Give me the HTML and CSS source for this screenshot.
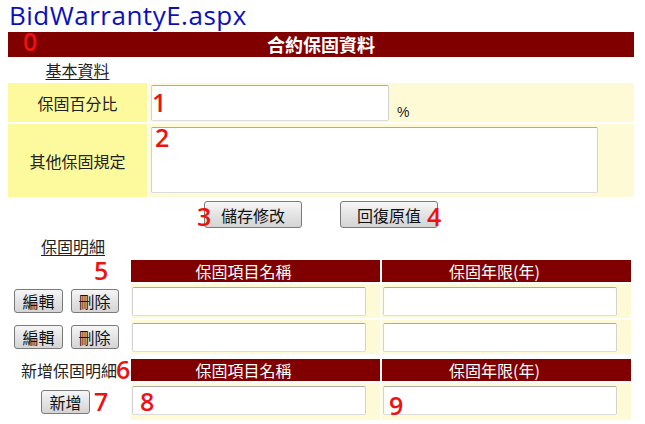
FILE: index.html
```html
<!DOCTYPE html>
<html lang="zh-Hant">
<head>
<meta charset="utf-8">
<title>BidWarrantyE.aspx</title>
<link rel="stylesheet" href="styles.css">
</head>
<body>
<div class="page">
  <h1 class="title">BidWarrantyE.aspx</h1>
  <div class="form">
    <div class="bar">合約保固資料</div>
    <div class="sub"><span class="ul">基本資料</span></div>
    <div class="grid1">
      <div class="lbl">保固百分比</div>
      <div class="val val1"><input class="in1" type="text"><span class="pct">%</span></div>
      <div class="lbl">其他保固規定</div>
      <div class="val val2"><textarea class="ta"></textarea></div>
    </div>
    <div class="btnrow">
      <button class="btn btn-lg">儲存修改</button>
      <button class="btn btn-lg">回復原值</button>
    </div>
    <div class="sub2"><span class="ul">保固明細</span></div>
    <div class="grid2">
      <div class="side"></div>
      <div class="th">保固項目名稱</div>
      <div class="th">保固年限(年)</div>

      <div class="side acts"><button class="btn btn-sm">編輯</button><button class="btn btn-sm">刪除</button></div>
      <div class="td"><input class="in2" type="text"></div>
      <div class="td"><input class="in2" type="text"></div>

      <div class="side acts"><button class="btn btn-sm">編輯</button><button class="btn btn-sm">刪除</button></div>
      <div class="td"><input class="in2" type="text"></div>
      <div class="td"><input class="in2" type="text"></div>
    </div>
    <div class="grid2 grid3">
      <div class="side newlbl">新增保固明細</div>
      <div class="th">保固項目名稱</div>
      <div class="th">保固年限(年)</div>

      <div class="side acts addcell"><button class="btn btn-sm">新增</button></div>
      <div class="td tdlast"><input class="in2" type="text"></div>
      <div class="td tdlast"><input class="in2" type="text"></div>
    </div>
  </div>

  <span class="num n0">0</span>
  <span class="num n1">1</span>
  <span class="num n2">2</span>
  <span class="num n3">3</span>
  <span class="num n4">4</span>
  <span class="num n5">5</span>
  <span class="num n6">6</span>
  <span class="num n7">7</span>
  <span class="num n8">8</span>
  <span class="num n9">9</span>
</div>
</body>
</html>
```

FILE: styles.css
```css
html, body {
  margin: 0;
  padding: 0;
  background: #ffffff;
}
body {
  font-family: "Noto Sans CJK TC", "Noto Sans", sans-serif;
  font-size: 16px;
  color: #222;
}
.page {
  position: relative;
  width: 645px;
  height: 424px;
  overflow: hidden;
}
.title {
  margin: 0;
  height: 32px;
  padding-left: 9px;
  font-family: "Open Sans", "Liberation Sans", sans-serif;
  font-weight: normal;
  font-size: 26px;
  line-height: 30px;
  color: #0b10bb;
  letter-spacing: 0.5px;
  white-space: nowrap;
}
.form {
  margin-left: 8px;
  width: 626px;
}
.bar {
  height: 25px;
  background: #800000;
  color: #fff;
  font-weight: bold;
  font-size: 18px;
  line-height: 25px;
  text-align: center;
}
.sub {
  width: 139px;
  height: 26px;
  line-height: 26px;
  text-align: center;
}
.ul {
  text-decoration: underline;
  text-underline-offset: 2px;
  line-height: 1;
  color: #222;
}
.grid1 {
  display: grid;
  grid-template-columns: 139px 485px;
  grid-template-rows: 39px 73px;
  gap: 2px;
}
.lbl {
  background: #fdfa9d;
  display: flex;
  align-items: center;
  justify-content: center;
}
.val {
  background: #fffad6;
  display: flex;
  align-items: flex-start;
}
.val1 {
  padding: 2px 0 1px 2px;
}
.val2 {
  padding: 3px 0 4px 2px;
}
.in1, .ta, .in2 {
  box-sizing: border-box;
  margin: 0;
  background: #fff;
  border: 1px solid;
  border-color: #aaa #d2d2d2 #dcdcdc #d2d2d2;
  border-radius: 2px;
  font: inherit;
  outline: none;
  padding: 0;
}
.in1 {
  width: 238px;
  height: 36px;
}
.pct {
  align-self: flex-end;
  margin-left: 8px;
  font-family: "Liberation Sans", sans-serif;
  font-size: 14px;
  line-height: 18px;
  color: #222;
}
.ta {
  width: 447px;
  height: 66px;
  resize: none;
}
.btnrow {
  display: flex;
  justify-content: center;
  gap: 38px;
  padding: 4px 0;
  height: 27px;
}
.btn {
  box-sizing: border-box;
  margin: 0;
  border: 1px solid #7a7a7a;
  border-radius: 3px;
  background: linear-gradient(#f6f6f6, #e4e4e4 50%, #d4d4d4);
  font-family: "Noto Sans CJK TC", sans-serif;
  font-size: 16px;
  color: #111;
  line-height: 1;
  padding: 0;
}
.btn-lg {
  width: 98px;
  height: 27px;
}
.btn-sm {
  height: 24px;
  padding: 0 7px;
}
.sub2 {
  height: 28px;
  line-height: 28px;
  padding-left: 33px;
}
.grid2 {
  display: grid;
  grid-template-columns: 121px 249px 249px;
  grid-template-rows: 22px 34px 34px;
  gap: 2px;
}
.grid3 {
  margin-top: 5px;
  grid-template-rows: 22px 37px;
}
.th {
  background: #800000;
  color: #fff;
  font-size: 16px;
  line-height: 22px;
  text-align: center;
  padding-right: 24px;
}
.td {
  background: #fffad6;
  padding: 3px 0 2px 1px;
}
.tdlast {
  padding-top: 3px;
}
.in2 {
  width: 234px;
  height: 29px;
}
.side {
  display: flex;
  align-items: center;
  justify-content: center;
}
.acts {
  gap: 8px;
  padding-right: 4px;
}
.newlbl {
  font-size: 16px;
  color: #222;
  padding-left: 1px;
}
.addcell {
  padding-right: 6px;
}
.num {
  position: absolute;
  font-family: "Open Sans", "Liberation Sans", sans-serif;
  font-weight: 600;
  font-size: 25px;
  line-height: 1;
  color: #ee1111;
}
.n0 { left: 23px; top: 29px; }
.n1 { left: 152px; top: 90px; }
.n2 { left: 155px; top: 125px; }
.n3 { left: 197px; top: 204px; }
.n4 { left: 427px; top: 204px; }
.n5 { left: 94px; top: 258px; }
.n6 { left: 116px; top: 357px; }
.n7 { left: 94px; top: 389px; }
.n8 { left: 140px; top: 389px; }
.n9 { left: 389px; top: 393px; }
```
